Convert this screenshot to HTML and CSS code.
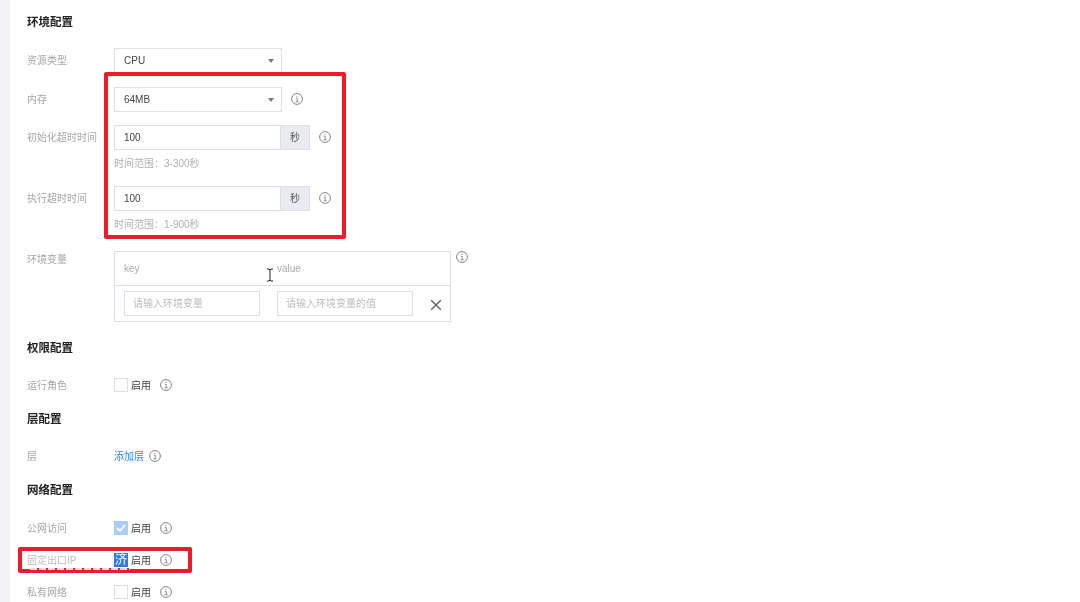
FILE: index.html
```html
<!DOCTYPE html>
<html lang="zh-CN">
<head>
<meta charset="UTF-8">
<title>函数配置</title>
<link rel="stylesheet" href="styles.css">
</head>
<body>

<svg class="defs" width="0" height="0">
    <symbol id="info" viewBox="0 0 12 12">
        <circle cx="6" cy="6" r="5.4" fill="none" stroke="currentColor" stroke-width="0.9"/>
        <path d="M4.8 5.2h1.4v3.5M4.5 8.8h3.2M6 2.8v1.2" fill="none" stroke="currentColor" stroke-width="0.8"/>
    </symbol>
</svg>

<div class="page">
    <h2 class="first">环境配置</h2>

    <div class="row row-type">
        <label>资源类型</label>
        <div class="select">CPU<i class="caret"></i></div>
    </div>
    <div class="row row-mem">
        <label>内存</label>
        <div class="select">64MB<i class="caret"></i></div>
        <svg class="tip"><use href="#info"/></svg>
    </div>
    <div class="row row-time">
        <label>初始化超时时间</label>
        <div class="addon-input"><span class="value">100</span><span class="unit">秒</span></div>
        <svg class="tip"><use href="#info"/></svg>
    </div>
    <p class="hint">时间范围&#xFF1A;3-300秒</p>
    <div class="row row-time">
        <label>执行超时时间</label>
        <div class="addon-input"><span class="value">100</span><span class="unit">秒</span></div>
        <svg class="tip"><use href="#info"/></svg>
    </div>
    <p class="hint">时间范围&#xFF1A;1-900秒</p>

    <div class="row row-env">
        <label>环境变量</label>
        <div class="env-table">
            <div class="env-head"><span class="env-key">key</span><span>value</span></div>
            <div class="env-body">
                <div class="env-input">请输入环境变量</div>
                <div class="env-input">请输入环境变量的值</div>
                <svg class="close" width="12" height="12" viewBox="0 0 12 12"><path d="M1.2 1.2l9.6 9.6M10.8 1.2l-9.6 9.6" stroke="#666" stroke-width="1.5" fill="none"/></svg>
            </div>
        </div>
        <svg class="tip tip-env"><use href="#info"/></svg>
    </div>

    <h2 class="perm">权限配置</h2>
    <div class="row row-check">
        <label>运行角色</label>
        <i class="box"></i><span class="enable">启用</span>
        <svg class="tip"><use href="#info"/></svg>
    </div>

    <h2 class="layer">层配置</h2>
    <div class="row row-layer">
        <label>层</label>
        <a class="link">添加层</a>
        <svg class="tip"><use href="#info"/></svg>
    </div>

    <h2 class="net">网络配置</h2>
    <div class="row row-check row-public">
        <label>公网访问</label>
        <i class="box box-checked"><svg width="14" height="14" viewBox="0 0 14 14"><path d="M3 7l3 3 5-6" stroke="#fff" stroke-width="1.8" fill="none"/></svg></i><span class="enable">启用</span>
        <svg class="tip"><use href="#info"/></svg>
    </div>
    <div class="row row-check row-fixed">
        <label class="label-ip">固定出口IP</label>
        <i class="box box-selected">济</i><span class="enable">启用</span>
        <svg class="tip"><use href="#info"/></svg>
    </div>
    <div class="row row-check row-private">
        <label>私有网络</label>
        <i class="box"></i><span class="enable">启用</span>
        <svg class="tip"><use href="#info"/></svg>
    </div>
</div>

<div class="mark mark-main"></div>
<div class="mark mark-ip"></div>
<div class="mark-glitch"></div>
<svg class="cursor" width="8" height="14" viewBox="0 0 8 14"><path d="M1 1h2l1 1 1-1h2M4 2v10M1 13h2l1-1 1 1h2" stroke="#222" stroke-width="1" fill="none"/></svg>

</body>
</html>
```

FILE: styles.css
```css
html, body {
    margin: 0;
    padding: 0;
    height: 602px;
    overflow: hidden;
    background-color: #fff;
}
body {
    font-family: "Liberation Sans", "Noto Sans CJK SC", sans-serif;
    font-size: 10px;
    color: #444;
    position: relative;
}
.defs {
    position: absolute;
}
.page {
    margin-left: 10px;
    padding: 15px 0 0 17px;
    height: 587px;
    background-color: #fff;
    filter: blur(0.35px);
}
body::before {
    content: "";
    position: absolute;
    left: 0;
    top: 0;
    bottom: 0;
    width: 10px;
    background-color: #f2f4f8;
}
h2 {
    margin: 0;
    font-size: 11.5px;
    line-height: 14px;
    font-weight: bold;
    color: #222;
}
.row {
    display: flex;
    align-items: center;
}
label {
    width: 87px;
    flex-shrink: 0;
    color: #a6a6a6;
    margin-top: -2px;
}
.row-type {
    margin-top: 19px;
}
.row-mem {
    margin-top: 14px;
}
.row-time {
    margin-top: 13px;
}
.select {
    width: 168px;
    height: 25px;
    box-sizing: border-box;
    border: 1px solid #dcdfe6;
    padding-left: 9px;
    display: flex;
    align-items: center;
    justify-content: space-between;
    color: #444;
}
.caret {
    width: 0;
    height: 0;
    margin-right: 7px;
    border-left: 3.5px solid transparent;
    border-right: 3.5px solid transparent;
    border-top: 4px solid #777;
}
.tip {
    width: 12px;
    height: 12px;
    margin-left: 9px;
    color: #777;
    flex-shrink: 0;
    margin-top: -1px;
}
.addon-input {
    display: flex;
    width: 196px;
    height: 25px;
    box-sizing: border-box;
    border: 1px solid #dcdfe6;
}
.value {
    flex: 1;
    padding-left: 9px;
    line-height: 23px;
}
.unit {
    width: 28px;
    text-align: center;
    line-height: 23px;
    background-color: #e8ebf0;
    border-left: 1px solid #dcdfe6;
    color: #555;
}
.hint {
    margin: 7px 0 0 87px;
    line-height: 14px;
    color: #b0b0b0;
}
.hint + .row-time {
    margin-top: 15px;
}
.row-env {
    align-items: flex-start;
    margin-top: 19px;
}
.row-env label {
    margin-top: 0;
}
.tip-env {
    margin: 0 0 0 5px;
}
.env-table {
    width: 337px;
    height: 71px;
    box-sizing: border-box;
    border: 1px solid #dcdfe6;
}
.env-head {
    height: 33px;
    line-height: 33px;
    padding-left: 9px;
    display: flex;
    color: #aaa;
    border-bottom: 1px solid #dcdfe6;
}
.env-key {
    width: 153px;
}
.env-body {
    display: flex;
    align-items: center;
    height: 35px;
    padding-left: 9px;
}
.env-input {
    width: 136px;
    height: 25px;
    box-sizing: border-box;
    border: 1px solid #dcdfe6;
    padding-left: 8px;
    line-height: 24px;
    color: #bbb;
    margin-right: 17px;
}
.close {
    margin-left: 0;
    margin-top: 2px;
}
.perm {
    margin-top: 19px;
}
.row-check, .row-layer {
    height: 14px;
}
.perm + .row-check {
    margin-top: 23px;
}
.box {
    display: flex;
    justify-content: center;
    width: 14px;
    height: 14px;
    box-sizing: border-box;
    border: 1px solid #dcdfe6;
    flex-shrink: 0;
    overflow: hidden;
}
.box-checked {
    background-color: #a8cdfb;
    border: 0;
}
.box-selected {
    background-color: #2f7de1;
    border: 0;
    color: #fff;
    font-style: normal;
    font-size: 12px;
    line-height: 14px;
}
.enable {
    margin-left: 3px;
    margin-top: -2px;
    color: #444;
}
.row-check .tip {
    margin-left: 9px;
}
.layer {
    margin-top: 20px;
}
.row-layer {
    margin-top: 23px;
}
.link {
    color: #2f86ec;
    margin-top: -2px;
}
.row-layer .tip {
    margin-left: 5px;
}
.net {
    margin-top: 20px;
}
.row-public {
    margin-top: 24px;
}
.row-fixed, .row-private {
    margin-top: 18px;
}
.label-ip {
    color: #bdbdbd;
}
.mark {
    position: absolute;
    box-sizing: border-box;
    border: 4px solid #ec1c2c;
    border-radius: 2px;
}
.mark-main {
    left: 104px;
    top: 72px;
    width: 242px;
    height: 167px;
}
.mark-ip {
    left: 18px;
    top: 547px;
    width: 174px;
    height: 26px;
}
.mark-glitch {
    position: absolute;
    left: 30px;
    top: 568px;
    width: 100px;
    height: 2px;
    background: repeating-linear-gradient(90deg, #f9d5d7 0 7px, #ec1c2c 7px 9px);
}
.cursor {
    position: absolute;
    left: 266px;
    top: 268px;
}
```
